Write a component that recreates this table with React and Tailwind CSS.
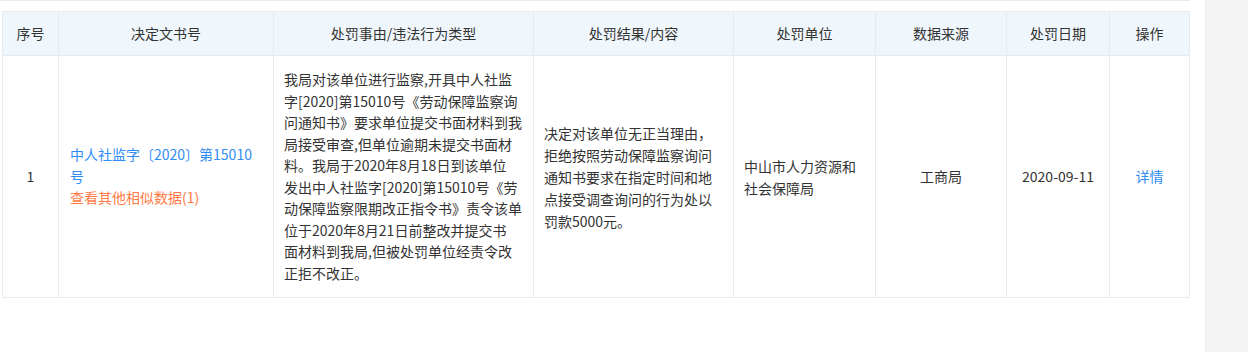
const headers = ['序号', '决定文书号', '处罚事由/违法行为类型', '处罚结果/内容', '处罚单位', '数据来源', '处罚日期', '操作'];
const widths = [56, 215, 260, 200, 142, 131, 103, 80];

// line breaks follow the original page
const reasonLines = [
  '我局对该单位进行监察,开具中人社监',
  '字[2020]第15010号《劳动保障监察询',
  '问通知书》要求单位提交书面材料到我',
  '局接受审查,但单位逾期未提交书面材',
  '料。我局于2020年8月18日到该单位',
  '发出中人社监字[2020]第15010号《劳',
  '动保障监察限期改正指令书》责令该单',
  '位于2020年8月21日前整改并提交书',
  '面材料到我局,但被处罚单位经责令改',
  '正拒不改正。',
];

const App = () => {
  return (
    <div className="flex h-[352px] bg-white text-[14px] text-[#333] font-['Microsoft_YaHei','Noto_Sans_CJK_SC',sans-serif]">
      <div className="w-[1190px] border-t border-[#e4ecf3] pt-[10px] pl-[2px]">
        <table className="w-[1188px] table-fixed border-separate border-spacing-0 border-l border-t border-[#e4ecf3]">
          <colgroup>
            {widths.map((w, i) => (
              <col key={i} style={{ width: w }} />
            ))}
          </colgroup>
          <thead>
            <tr className="h-[44px] bg-[#f0f7fc]">
              {headers.map((h) => (
                <th key={h} className="border-r border-b border-[#e4ecf3] font-normal text-center">
                  {h}
                </th>
              ))}
            </tr>
          </thead>
          <tbody>
            <tr className="h-[242px] leading-[21.5px] align-middle">
              <td className="border-r border-b border-[#e4ecf3] text-center">1</td>
              <td className="border-r border-b border-[#e4ecf3] px-[11px]">
                <div className="text-[#2f8df3]">中人社监字〔2020〕第15010号</div>
                <div className="text-[#ff7a45]">查看其他相似数据(1)</div>
              </td>
              <td className="border-r border-b border-[#e4ecf3] px-[10px] py-[13px]">
                {reasonLines.map((l) => (
                  <div key={l} className="whitespace-nowrap">{l}</div>
                ))}
              </td>
              <td className="border-r border-b border-[#e4ecf3] px-[10px] leading-[22px]">
                决定对该单位无正当理由，拒绝按照劳动保障监察询问通知书要求在指定时间和地点接受调查询问的行为处以罚款5000元。
              </td>
              <td className="border-r border-b border-[#e4ecf3] px-[10px] leading-[22px]">
                中山市人力资源和社会保障局
              </td>
              <td className="border-r border-b border-[#e4ecf3] text-center">工商局</td>
              <td className="border-r border-b border-[#e4ecf3] text-center">2020-09-11</td>
              <td className="border-r border-b border-[#e4ecf3] text-center text-[#2f8df3]">详情</td>
            </tr>
          </tbody>
        </table>
      </div>
      <div className="ml-[15px] flex-1 border-l border-[#ebebeb] bg-[#f4f4f4]" />
    </div>
  );
};

export default App;
